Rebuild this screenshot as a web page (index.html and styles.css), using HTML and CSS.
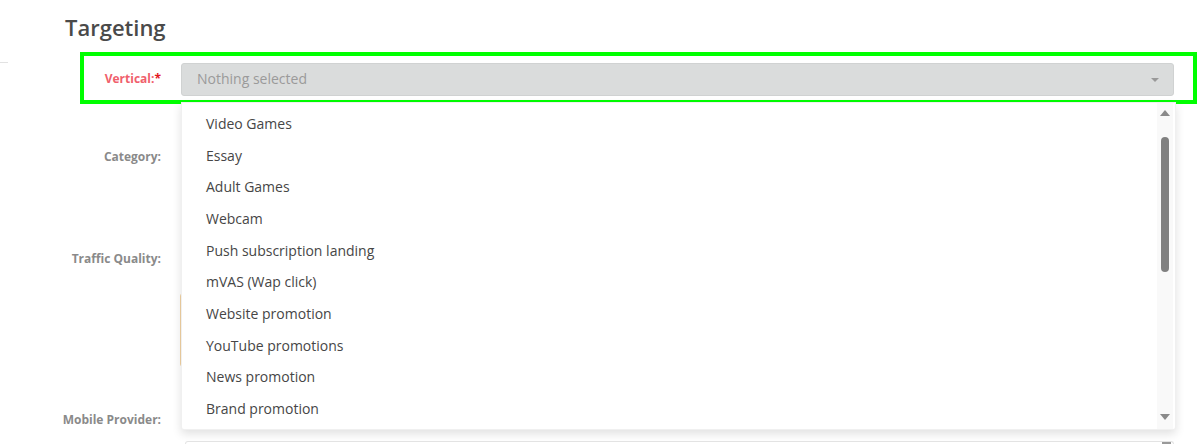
FILE: index.html
```html
<!DOCTYPE html>
<html lang="en">
<head>
  <meta charset="UTF-8" />
  <title>Targeting</title>
  <link rel="stylesheet" href="styles.css">
</head>
<body>

  <div class="side-rule"></div>

  <section class="targeting">
    <h2 class="section-title">Targeting</h2>

    <div class="form-row form-row--active">
      <label class="field-label field-label--required">Vertical:<span class="req">*</span></label>
      <div class="select-wrap">
        <div class="select-box">
          <span class="select-placeholder">Nothing selected</span>
          <span class="caret"></span>
        </div>

        <div class="dropdown">
          <ul class="dropdown-list">
            <li>Video Games</li>
            <li>Essay</li>
            <li>Adult Games</li>
            <li>Webcam</li>
            <li>Push subscription landing</li>
            <li>mVAS (Wap click)</li>
            <li>Website promotion</li>
            <li>YouTube promotions</li>
            <li>News promotion</li>
            <li>Brand promotion</li>
          </ul>
          <div class="scrollbar">
            <div class="scroll-btn"><span class="arrow-up"></span></div>
            <div class="scroll-track"><div class="scroll-thumb"></div></div>
            <div class="scroll-btn"><span class="arrow-down"></span></div>
          </div>
        </div>
      </div>
    </div>

    <div class="form-row row-category">
      <label class="field-label">Category:</label>
      <div class="input-box"></div>
    </div>

    <div class="form-row row-quality">
      <label class="field-label">Traffic Quality:</label>
      <div class="input-box"></div>
    </div>

    <div class="form-row row-notice">
      <span></span>
      <div class="notice-box"></div>
    </div>

    <div class="form-row row-provider">
      <label class="field-label">Mobile Provider:</label>
      <div class="list-box"><span class="list-scroll"></span></div>
    </div>
  </section>

</body>
</html>
```

FILE: styles.css
```css
body {
  margin: 0;
  font-family: "Open Sans", "Liberation Sans", sans-serif;
  background: #fff;
  color: #444;
  overflow: hidden;
}

.side-rule {
  position: absolute;
  left: 0;
  top: 62px;
  width: 8px;
  border-top: 1px solid #e2e2e2;
}

.targeting {
  padding-top: 12px;
}

.section-title {
  margin: 0 0 10px 65px;
  font-size: 22px;
  line-height: 30px;
  font-weight: 600;
  color: #4a4a4a;
}

/* label column ends at 161px, controls start at 181px */
.form-row {
  display: grid;
  grid-template-columns: 77px 1fr;
  column-gap: 20px;
  align-items: center;
  margin-left: 80px;
  width: 1117px;
  box-sizing: border-box;
  padding: 0 23px 0 4px;
}

.form-row--active {
  border: 4px solid #00ff00;
  padding: 7px 19px 4px 0;
  position: relative;
  z-index: 2;
}

.field-label {
  justify-self: end;
  font-size: 12px;
  font-weight: 700;
  color: #8a8a8a;
  white-space: nowrap;
}

.field-label--required {
  color: #f0606c;
  margin-bottom: 2px;
}

.req {
  color: #e3161d;
}

.select-wrap {
  position: relative;
}

.select-box {
  display: flex;
  align-items: center;
  justify-content: space-between;
  height: 33px;
  box-sizing: border-box;
  padding: 0 14px 2px 15px;
  background: #dadcdc;
  border: 1px solid #d0d2d2;
  border-radius: 3px;
}

.select-placeholder {
  font-size: 14px;
  color: #9a9a9a;
}

.caret {
  width: 0;
  height: 0;
  border-left: 4px solid transparent;
  border-right: 4px solid transparent;
  border-top: 4px solid #999;
  margin-top: 2px;
}

/* open menu of the vertical select */
.dropdown {
  position: absolute;
  top: 39px;
  left: 0;
  width: calc(100% + 2px);
  display: flex;
  box-sizing: border-box;
  background: #fff;
  border: 1px solid rgba(0, 0, 0, 0.06);
  border-radius: 0 0 3px 3px;
  box-shadow: 0 4px 10px rgba(0, 0, 0, 0.12);
}

.dropdown-list {
  flex: 1;
  list-style: none;
  margin: 0;
  padding: 5px 0 4px;
}

.dropdown-list li {
  padding: 0 24px;
  font-size: 14px;
  line-height: 31.67px;
  color: #464646;
}

.scrollbar {
  width: 16px;
  margin-right: 2px;
  display: flex;
  flex-direction: column;
  background: #f9f9f9;
}

.scroll-btn {
  height: 20px;
  display: flex;
  align-items: center;
  justify-content: center;
}

.arrow-up,
.arrow-down {
  width: 0;
  height: 0;
  border-left: 5px solid transparent;
  border-right: 5px solid transparent;
}

.arrow-up {
  border-bottom: 6px solid #8a8a8a;
}

.arrow-down {
  border-top: 6px solid #8a8a8a;
  margin-top: -4px;
}

.scroll-track {
  flex: 1;
  padding-top: 14px;
}

.scroll-thumb {
  width: 8px;
  height: 135px;
  margin: 0 auto;
  border-radius: 4px;
  background: #808080;
}

/* rows sitting behind the menu */
.input-box {
  height: 34px;
  border: 1px solid #e4e4e4;
  border-radius: 3px;
}

.row-category {
  margin-top: 34px;
}

.row-quality {
  margin-top: 66px;
}

.row-notice {
  margin-top: 17px;
}

.notice-box {
  height: 74px;
  box-sizing: border-box;
  margin-left: -1px;
  border: 1px solid #f3d3a3;
  border-radius: 3px;
}

.row-provider {
  margin-top: 36px;
  align-items: start;
}

.row-provider .field-label {
  line-height: 34px;
}

.list-box {
  position: relative;
  height: 10px;
  margin-top: 38px;
  margin-left: 4px;
  border: 1px solid #e4e4e4;
  border-bottom: 0;
  border-radius: 3px 3px 0 0;
}

.list-scroll {
  position: absolute;
  right: 2px;
  top: 0;
  width: 9px;
  height: 6px;
  background: #999;
}
```
